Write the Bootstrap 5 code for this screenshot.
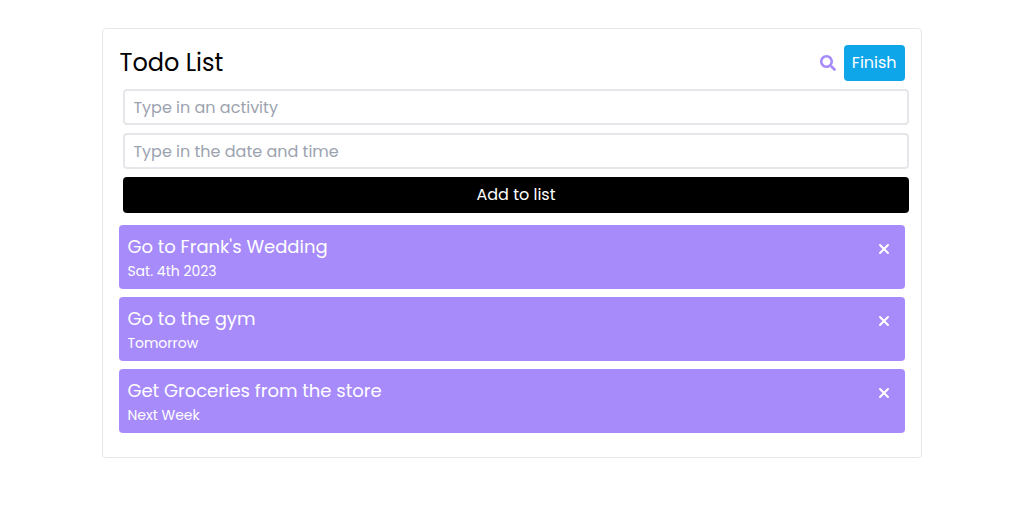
<!DOCTYPE html>
<html lang="en">
<head>
<meta charset="utf-8">
<meta name="viewport" content="width=device-width, initial-scale=1">
<title>Todo List</title>
<link href="https://cdn.jsdelivr.net/npm/bootstrap@5.3.0/dist/css/bootstrap.min.css" rel="stylesheet">
<style>
body { font-family: Poppins, Inter, sans-serif; color: #000; background: #fff; }
.todo-panel { width: 80%; margin-top: 28px; border: 1px solid #e5e7eb; border-radius: 4px; }
.todo-title { font-size: 24px; line-height: 36px; font-weight: 400; }
.todo-btn { height: 36px; padding: 0 8px; border: 0; border-radius: 4px; font-size: 16px; line-height: 36px; color: #fff; }
.finish-btn { background: #0ea5e9; }
.finish-btn:hover { background: #0284c7; color: #fff; }
.add-btn, .add-btn:hover { background: #000; color: #fff; }
.todo-form { margin: 8px -4px 12px 4px; }
.todo-input { height: 36px; padding: 0 8px; border: 2px solid #e5e7eb; border-radius: 4px; font-size: 16px; line-height: 32px; }
.todo-input::placeholder { color: #9ca3af; }
.search-btn { color: #a78bfa; }
.todo-item { height: 64px; padding: 8px; border-radius: 4px; background: #a78bfa; color: #fff; }
.item-name { font-size: 18px; line-height: 28px; font-weight: 400; }
.item-date { font-size: 14px; line-height: 20px; }
.item-close { margin: 8px 5px 0 0; }
</style>
</head>
<body>
<main class="todo-panel mx-auto p-3 pb-4">
  <header class="d-flex justify-content-between align-items-center">
    <h1 class="todo-title m-0">Todo List</h1>
    <div class="d-flex align-items-center gap-2">
      <button type="button" class="search-btn btn border-0 p-0 d-flex" aria-label="Search">
        <svg width="16" height="16" viewBox="0 0 512 512" fill="currentColor" aria-hidden="true"><path d="M505 442.700 405.300 343c-4.500-4.500-10.600-7-17-7H372c27.600-35.300 44-79.700 44-128C416 93.100 322.900 0 208 0S0 93.100 0 208s93.100 208 208 208c48.300 0 92.700-16.400 128-44v16.300c0 6.400 2.500 12.500 7 17l99.700 99.700c9.400 9.400 24.600 9.400 33.900 0l28.300-28.300c9.400-9.400 9.400-24.600.1-34zM208 336c-70.700 0-128-57.200-128-128 0-70.700 57.200-128 128-128 70.700 0 128 57.200 128 128 0 70.700-57.200 128-128 128z"/></svg>
      </button>
      <button type="button" class="todo-btn finish-btn btn">Finish</button>
    </div>
  </header>
  <form class="todo-form d-flex flex-column gap-2">
    <input type="text" class="todo-input form-control" placeholder="Type in an activity" aria-label="Activity">
    <input type="text" class="todo-input form-control" placeholder="Type in the date and time" aria-label="Date and time">
    <button type="button" class="todo-btn add-btn btn w-100">Add to list</button>
  </form>
  <ul class="list-unstyled d-flex flex-column gap-2 m-0">
    <li class="todo-item d-flex justify-content-between align-items-start">
      <div><h2 class="item-name m-0">Go to Frank's Wedding</h2><p class="item-date m-0">Sat. 4th 2023</p></div>
      <button type="button" class="item-close btn border-0 p-0 text-white d-flex" aria-label="Remove Go to Frank's Wedding"><svg width="16" height="16" viewBox="0 0 16 16" fill="none" stroke="currentColor" stroke-width="2" stroke-linecap="round" aria-hidden="true"><path d="M4 4l8 8M12 4l-8 8"/></svg></button>
    </li>
    <li class="todo-item d-flex justify-content-between align-items-start">
      <div><h2 class="item-name m-0">Go to the gym</h2><p class="item-date m-0">Tomorrow</p></div>
      <button type="button" class="item-close btn border-0 p-0 text-white d-flex" aria-label="Remove Go to the gym"><svg width="16" height="16" viewBox="0 0 16 16" fill="none" stroke="currentColor" stroke-width="2" stroke-linecap="round" aria-hidden="true"><path d="M4 4l8 8M12 4l-8 8"/></svg></button>
    </li>
    <li class="todo-item d-flex justify-content-between align-items-start">
      <div><h2 class="item-name m-0">Get Groceries from the store</h2><p class="item-date m-0">Next Week</p></div>
      <button type="button" class="item-close btn border-0 p-0 text-white d-flex" aria-label="Remove Get Groceries from the store"><svg width="16" height="16" viewBox="0 0 16 16" fill="none" stroke="currentColor" stroke-width="2" stroke-linecap="round" aria-hidden="true"><path d="M4 4l8 8M12 4l-8 8"/></svg></button>
    </li>
  </ul>
</main>
<script src="https://cdn.jsdelivr.net/npm/bootstrap@5.3.0/dist/js/bootstrap.bundle.min.js"></script>
</body>
</html>
